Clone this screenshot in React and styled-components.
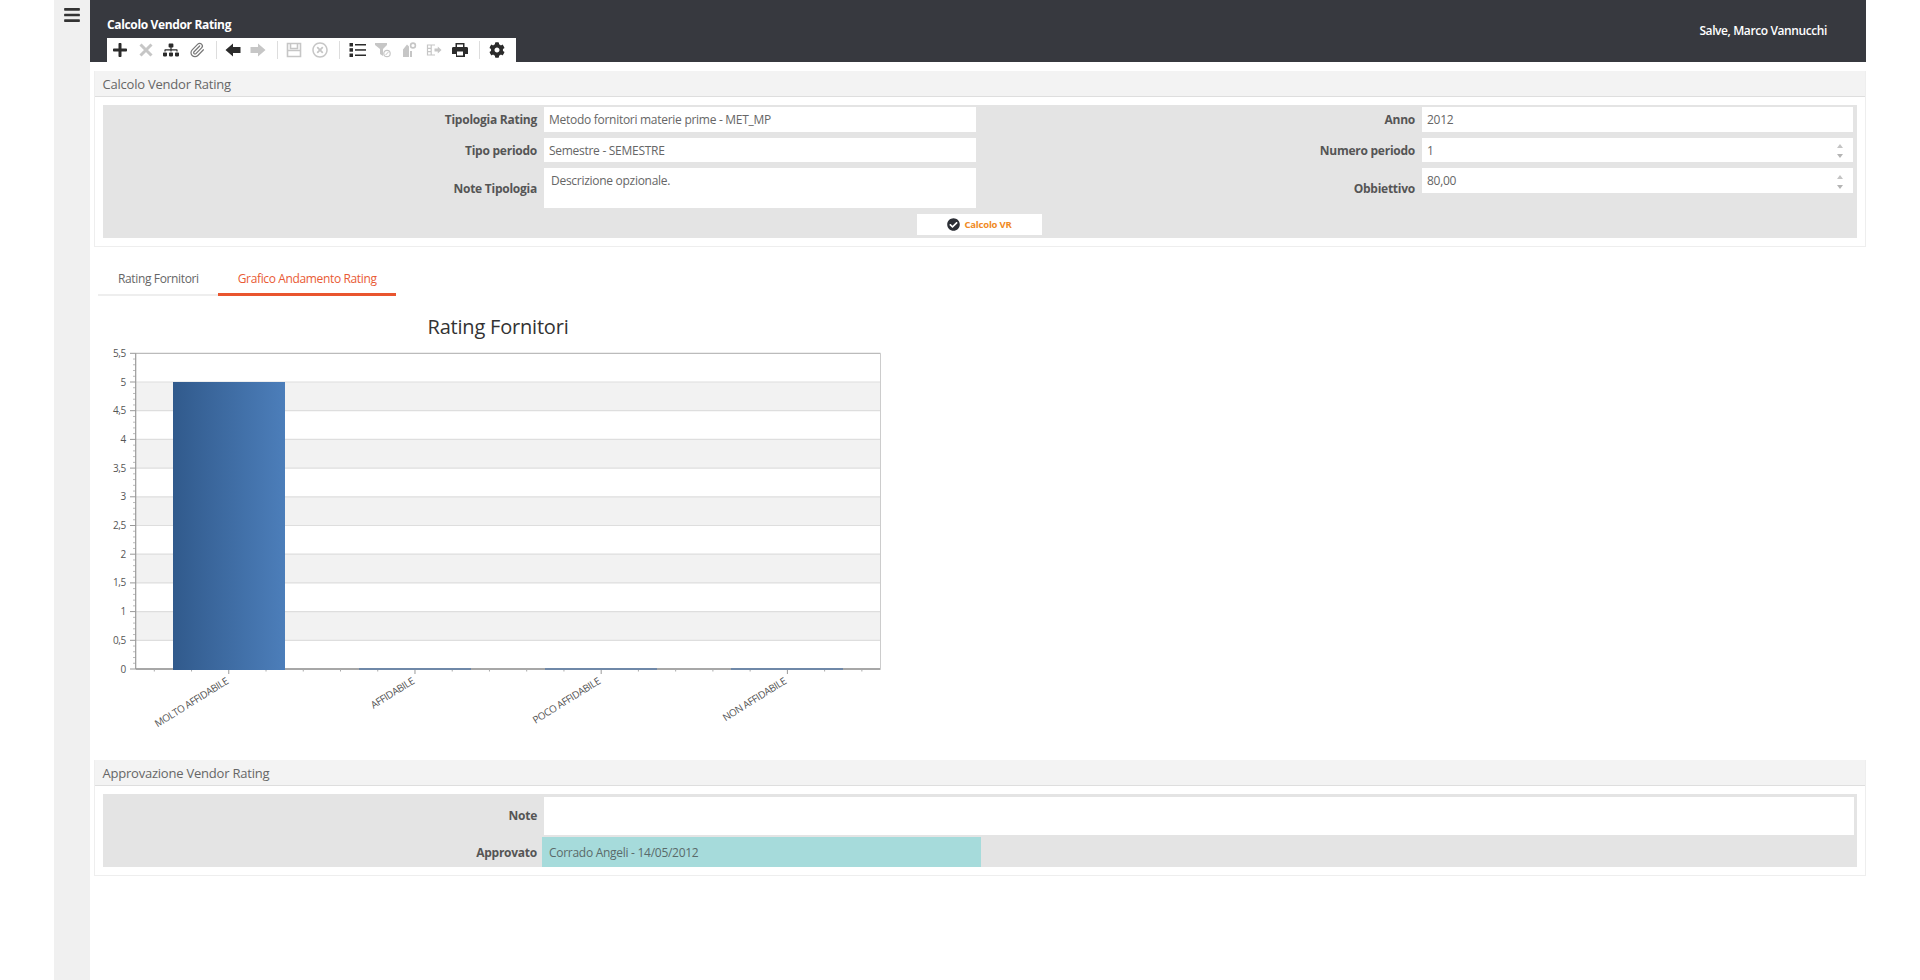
import React from 'react';
import styled, { createGlobalStyle } from 'styled-components';
import { FaPlus, FaSitemap, FaRegTimesCircle, FaCog, FaBars, FaCheckCircle } from 'react-icons/fa';
import { Paperclip } from 'lucide-react';

const FONT = '"Open Sans", "Noto Sans", "Liberation Sans", sans-serif';

const Global = createGlobalStyle`
  html, body { margin: 0; padding: 0; background: #fff; }
  body { font-family: ${FONT}; overflow: hidden; }
`;

const Page = styled.div`
  display: flex;
  height: 980px;
  padding: 0 54px;
  box-sizing: border-box;
`;
const Sidebar = styled.aside`
  width: 36px;
  flex: none;
  background: #f0f0f0;
  display: flex;
  justify-content: center;
  padding-top: 6px;
  box-sizing: border-box;
  color: #333;
  font-size: 18px;
`;
const Main = styled.main`
  flex: 1;
  min-width: 0;
  display: flex;
  flex-direction: column;
`;
const Header = styled.header`
  height: 62px;
  flex: none;
  background: #37393f;
  display: flex;
  justify-content: space-between;
  color: #fff;
`;
const TitleBlock = styled.div`
  display: flex;
  flex-direction: column;
  padding-left: 17px;
`;
const PageTitle = styled.h1`
  margin: 16px 0 0;
  height: 22px;
  font-size: 12px;
  line-height: 17px;
  font-weight: 700;
  letter-spacing: -0.35px;
  white-space: nowrap;
`;
const Toolbar = styled.div`
  display: flex;
  align-items: center;
  width: 409px;
  height: 24px;
  padding-left: 0.5px;
  box-sizing: border-box;
  background: #fff;
`;
const Tool = styled.span`
  width: 25.6px;
  flex: none;
  display: flex;
  justify-content: center;
  align-items: center;
  font-size: ${p => p.$size || 16}px;
  color: ${p => (p.$off ? '#c6c6c6' : p.$mid ? '#777' : '#2b2b2b')};
`;
const ToolSep = styled.span`
  flex: none;
  width: 1px;
  height: 18px;
  background: #ddd;
  margin: 0 ${p => p.$gap - 1.2}px 0 ${p => p.$gap + 1.2}px;
`;
const Greeting = styled.div`
  margin: 22px 39px 0 0;
  font-size: 12px;
  line-height: 17px;
  font-weight: 600;
  letter-spacing: -0.4px;
`;
const Panel = styled.section`
  margin: ${p => p.$top}px 0 0 4px;
  border: 1px solid #eee;
  border-top: 0;
  flex: none;
`;
const PanelHead = styled.div`
  height: 25px;
  background: #f3f3f3;
  border-bottom: 1px solid #dedede;
  padding-left: 7.5px;
  font-size: 13px;
  line-height: 27px;
  color: #666;
  letter-spacing: -0.22px;
`;
const PanelBody = styled.div`
  padding: 8px;
`;
const FormGrid = styled.div`
  display: grid;
  grid-template-columns: 434px 432px 432px 431px;
  column-gap: 7px;
  grid-template-rows: 25px 24px 40px 21px;
  row-gap: 6px;
  padding: 2px 0 3px;
  background: #e4e4e4;
  font-size: 12px;
`;
const Label = styled.label`
  align-self: center;
  text-align: right;
  font-weight: 700;
  color: #555;
  font-size: 12px;
  letter-spacing: -0.25px;
  white-space: nowrap;
  margin-top: ${p => (p.$lift ? '-2px' : '0')};
`;
const Field = styled.div`
  height: ${p => p.$h || 'auto'};
  align-self: start;
  background: #fff;
  display: flex;
  justify-content: space-between;
  align-items: ${p => (p.$top ? 'flex-start' : 'center')};
  padding: ${p => (p.$top ? '3.5px' : '1px')} 10px 0 ${p => p.$pad || 5}px;
  box-sizing: border-box;
  color: #666;
  letter-spacing: -0.28px;
  line-height: 18px;
  white-space: nowrap;
`;
const Spinner = styled.span`
  display: flex;
  flex-direction: column;
  gap: 6px;
  align-self: center;
  &::before, &::after {
    content: '';
    width: 0;
    height: 0;
    border-left: 3px solid transparent;
    border-right: 3px solid transparent;
  }
  &::before { border-bottom: 4px solid #c4c4c4; }
  &::after { border-top: 4px solid #b4b4b4; }
`;
const ActionRow = styled.div`
  grid-column: 1 / -1;
  display: flex;
  justify-content: center;
  padding-left: 3px;
`;
const ActionButton = styled.button`
  width: 125px;
  height: 21px;
  border: 0;
  padding: 0;
  background: #fff;
  display: flex;
  align-items: center;
  justify-content: center;
  gap: 4px;
  font-family: ${FONT};
  font-size: 9.5px;
  font-weight: 700;
  letter-spacing: -0.2px;
  color: #f08a24;
  svg { color: #2c2f36; font-size: 13px; }
`;
const Tabs = styled.nav`
  display: flex;
  margin: 17px 0 0 8px;
  height: 32px;
  flex: none;
`;
const Tab = styled.div`
  padding: 6px 19px 0 20px;
  font-size: 12px;
  line-height: 18px;
  letter-spacing: -0.36px;
  color: ${p => (p.$active ? '#e95a34' : '#666')};
  border-bottom: ${p => (p.$active ? '3px solid #e9552f' : '2px solid #eee')};
  box-sizing: border-box;
  white-space: nowrap;
`;
const ChartBox = styled.svg`
  display: block;
  flex: none;
  font-family: ${FONT};
`;
const ApprovalGrid = styled.div`
  display: grid;
  grid-template-columns: 434px 1fr;
  column-gap: 5px;
  grid-template-rows: 38px 30px;
  row-gap: 2px;
  padding: 3px 0 0;
  background: #e4e4e4;
  font-size: 12px;
`;
const NoteField = styled.div`
  background: #fff;
  margin: 0 3px 0 2px;
`;
const ApprovedField = styled.div`
  width: 439px;
  background: #a6dbdb;
  padding-left: 7px;
  box-sizing: border-box;
  line-height: 31px;
  color: #5a6a6a;
  letter-spacing: -0.28px;
`;

const CrossIcon = () => (
  <svg width="16" height="16" viewBox="0 0 16 16" fill="none" stroke="currentColor" strokeWidth="3">
    <path d="M2.5 2.5l11 11M13.5 2.5l-11 11" />
  </svg>
);
const ArrowLeftIcon = () => (
  <svg width="16" height="14" viewBox="0 0 16 14" fill="currentColor">
    <path d="M0.5 7L8 0.5V4h7.5v6H8v3.5z" />
  </svg>
);
const ArrowRightIcon = () => (
  <svg width="16" height="14" viewBox="0 0 16 14" fill="currentColor">
    <path d="M15.5 7L8 0.5V4H0.5v6H8v3.5z" />
  </svg>
);
const SaveIcon = () => (
  <svg width="16" height="16" viewBox="0 0 16 16" fill="none" stroke="currentColor" strokeWidth="1.6">
    <path d="M1.5 1.5h13v13h-13zM4.5 1.5v5h7v-5M1.5 8.5h13" />
  </svg>
);
const ListIcon = () => (
  <svg width="17" height="16" viewBox="0 0 17 16" fill="currentColor">
    <rect x="0.5" y="1" width="3.5" height="3.5" />
    <rect x="0.5" y="6.2" width="3.5" height="3.5" />
    <rect x="0.5" y="11.5" width="3.5" height="3.5" />
    <rect x="6" y="2" width="11" height="1.5" />
    <rect x="6" y="7.2" width="11" height="1.5" />
    <rect x="6" y="12.5" width="11" height="1.5" />
  </svg>
);
const FilterIcon = () => (
  <svg width="16" height="16" viewBox="0 0 16 16" fill="currentColor">
    <path d="M0 1h12v2L8 7v7L5 12V7L0 3z" />
    <circle cx="12" cy="11.5" r="3.2" fill="none" stroke="currentColor" strokeWidth="1.2" />
    <path d="M10.6 13l2.8-3" stroke="currentColor" strokeWidth="1" />
  </svg>
);
const StampIcon = () => (
  <svg width="16" height="16" viewBox="0 0 16 16" fill="currentColor">
    <path d="M2 15V7.5L6 2.5l2 2V15zM9 9h2v6H9z" />
    <circle cx="12" cy="3.5" r="2.4" fill="none" stroke="currentColor" strokeWidth="1.6" />
  </svg>
);
const ExitIcon = () => (
  <svg width="16" height="16" viewBox="0 0 16 16" fill="none" stroke="currentColor" strokeWidth="1.2">
    <path d="M9 3H1.5v10H9M5.2 3v10M1.5 6.3h3.7M1.5 9.7h3.7" />
    <path d="M8.5 6.4h3.3V4.5L15.5 8l-3.7 3.5V9.6H8.5z" fill="currentColor" stroke="none" />
  </svg>
);
const PrintIcon = () => (
  <svg width="16" height="16" viewBox="0 0 16 16">
    <path fill="currentColor" d="M3.5 1h9v4h2.2c.7 0 1.3.6 1.3 1.3V12h-3v3h-9v-3H0V6.3C0 5.6.6 5 1.3 5h2.2z" />
    <rect x="5" y="2.5" width="6" height="2.5" fill="#fff" />
    <rect x="5" y="9.5" width="6" height="4" fill="#fff" />
  </svg>
);

const Y0 = 669;
const STEP = 28.7;
const yOf = v => Y0 - (v / 0.5) * STEP;
const L = 135.7;
const R = 880.5;
const yTicks = ['0', '0,5', '1', '1,5', '2', '2,5', '3', '3,5', '4', '4,5', '5', '5,5'];
const categories = [
  { name: 'MOLTO AFFIDABILE', x: 229, v: 5 },
  { name: 'AFFIDABILE', x: 415, v: 0 },
  { name: 'POCO AFFIDABILE', x: 601, v: 0 },
  { name: 'NON AFFIDABILE', x: 787, v: 0 },
];

function Chart() {
  const bands = [0.5, 1.5, 2.5, 3.5, 4.5];
  const minorY = [];
  for (let i = 0; i <= 55; i += 1) if (i % 5) minorY.push(Y0 - (i / 5) * STEP);
  const minorX = [];
  for (let k = 0; k < 20; k += 1) minorX.push({ x: L + 18.6 + 37.24 * k, major: k % 5 === 2 });
  return (
    <ChartBox width="810" height="464" viewBox="90 296 810 464">
      <defs>
        <linearGradient id="barFill" x1="0" x2="1" y1="0" y2="0">
          <stop offset="0" stopColor="#315a8c" />
          <stop offset="1" stopColor="#4c7eba" />
        </linearGradient>
      </defs>
      <text x="498" y="334" textAnchor="middle" fontSize="20" fill="#333" letterSpacing="-0.2">Rating Fornitori</text>
      {bands.map(b => (
        <rect key={b} x={L} y={yOf(b + 0.5)} width={R - L} height={STEP} fill="#f2f2f2" />
      ))}
      {yTicks.map((t, i) => {
        const y = Y0 - i * STEP;
        return (
          <g key={t}>
            <line x1={L} x2={R} y1={y} y2={y} stroke={i === 0 ? '#8a8a8a' : i === 11 ? '#bbb' : '#dedede'} strokeWidth={i === 0 ? 1.4 : 1.2} />
            <line x1={130} x2={L} y1={y} y2={y} stroke="#999" />
            <text x="126" y={y + 3.5} textAnchor="end" fontSize="10" fill="#555" letterSpacing="-0.3">{t}</text>
          </g>
        );
      })}
      {minorY.filter(y => y > 352).map(y => (
        <line key={y} x1={133} x2={L} y1={y} y2={y} stroke="#bbb" />
      ))}
      <line x1={L} x2={L} y1={yOf(5.5)} y2={Y0} stroke="#999" strokeWidth="1.2" />
      <line x1={R} x2={R} y1={yOf(5.5)} y2={Y0} stroke="#ccc" />
      {minorX.map(t => (
        <line key={t.x} x1={t.x} x2={t.x} y1={Y0} y2={Y0 + (t.major ? 5 : 2.5)} stroke={t.major ? '#999' : '#aaa'} />
      ))}
      {categories.map(c => (
        c.v > 0 ? (
          <rect key={c.name} x={c.x - 56} y={yOf(c.v)} width="112" height={Y0 - yOf(c.v) + 1} fill="url(#barFill)" />
        ) : (
          <rect key={c.name} x={c.x - 56} y={Y0 - 1} width="112" height="2" fill="#6f88a8" />
        )
      ))}
      {categories.map(c => (
        <text
          key={c.name}
          x={c.x}
          y={683}
          textAnchor="end"
          fontSize="10"
          fill="#555"
          letterSpacing="-0.42"
          transform={`rotate(-32 ${c.x} 683)`}
        >
          {c.name}
        </text>
      ))}
    </ChartBox>
  );
}

export default function App() {
  return (
    <>
      <Global />
      <Page>
        <Sidebar><FaBars /></Sidebar>
        <Main>
          <Header>
            <TitleBlock>
              <PageTitle>Calcolo Vendor Rating</PageTitle>
              <Toolbar>
                <Tool $size={16}><FaPlus /></Tool>
                <Tool $off><CrossIcon /></Tool>
                <Tool $size={16}><FaSitemap /></Tool>
                <Tool $mid><Paperclip size={16} strokeWidth={1.8} /></Tool>
                <ToolSep $gap={4.5} />
                <Tool><ArrowLeftIcon /></Tool>
                <Tool $off><ArrowRightIcon /></Tool>
                <ToolSep $gap={4.7} />
                <Tool $off><SaveIcon /></Tool>
                <Tool $off $size={16}><FaRegTimesCircle /></Tool>
                <ToolSep $gap={5.5} />
                <Tool><ListIcon /></Tool>
                <Tool $off><FilterIcon /></Tool>
                <Tool $off><StampIcon /></Tool>
                <Tool $off><ExitIcon /></Tool>
                <Tool><PrintIcon /></Tool>
                <ToolSep $gap={5.2} />
                <Tool $size={16}><FaCog /></Tool>
              </Toolbar>
            </TitleBlock>
            <Greeting>Salve, Marco Vannucchi</Greeting>
          </Header>

          <Panel $top={9}>
            <PanelHead>Calcolo Vendor Rating</PanelHead>
            <PanelBody>
              <FormGrid>
                <Label>Tipologia Rating</Label>
                <Field $h="25px">Metodo fornitori materie prime - MET_MP</Field>
                <Label>Anno</Label>
                <Field $h="25px">2012</Field>

                <Label>Tipo periodo</Label>
                <Field $h="24px">Semestre - SEMESTRE</Field>
                <Label>Numero periodo</Label>
                <Field $h="24px">1<Spinner /></Field>

                <Label>Note Tipologia</Label>
                <Field $h="40px" $top $pad={7}>Descrizione opzionale.</Field>
                <Label>Obbiettivo</Label>
                <Field $h="25px" $top>80,00<Spinner /></Field>

                <ActionRow>
                  <ActionButton><FaCheckCircle />Calcolo VR</ActionButton>
                </ActionRow>
              </FormGrid>
            </PanelBody>
          </Panel>

          <Tabs>
            <Tab>Rating Fornitori</Tab>
            <Tab $active>Grafico Andamento Rating</Tab>
          </Tabs>

          <Chart />

          <Panel $top={0}>
            <PanelHead>Approvazione Vendor Rating</PanelHead>
            <PanelBody>
              <ApprovalGrid>
                <Label $lift>Note</Label>
                <NoteField />
                <Label>Approvato</Label>
                <ApprovedField>Corrado Angeli - 14/05/2012</ApprovedField>
              </ApprovalGrid>
            </PanelBody>
          </Panel>
        </Main>
      </Page>
    </>
  );
}
